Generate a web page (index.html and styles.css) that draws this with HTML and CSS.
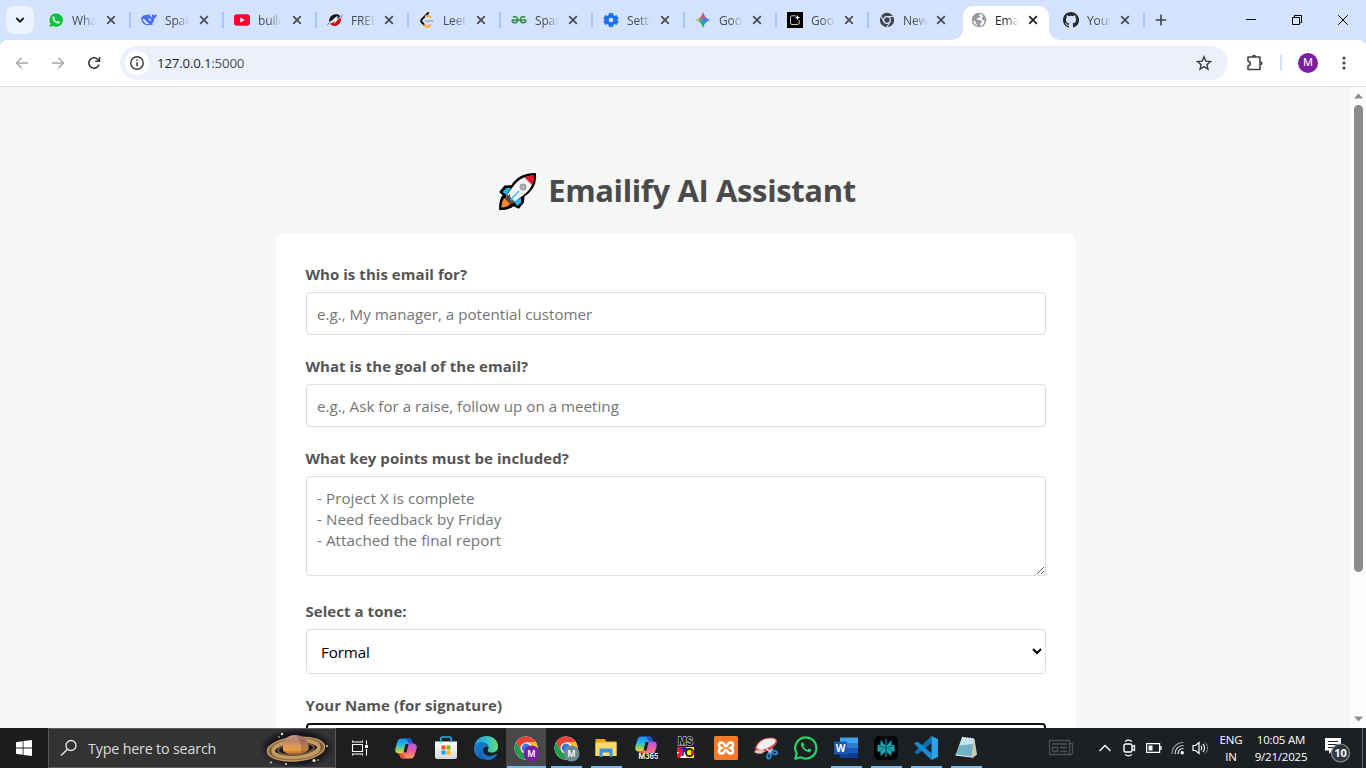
FILE: index.html
```html
<!DOCTYPE html>
<html lang="en">
<head>
<meta charset="utf-8">
<title>Emailify AI Assistant</title>
<link rel="stylesheet" href="styles.css">
</head>
<body>
<svg class="defs" width="0" height="0">
  <defs>
    <symbol id="x" viewBox="0 0 12 12"><path d="M2.2 2.2l7.6 7.6M9.8 2.2L2.2 9.8" stroke="currentColor" stroke-width="1.7" fill="none"/></symbol>
    <symbol id="wa" viewBox="0 0 24 24"><path d="M1.200 22.800l1.500-5.400A10.600 10.600 0 1 1 6.800 21.300z" fill="none" stroke="currentColor" stroke-width="2.200" stroke-linejoin="round"/><path d="M8.700 6.300c-.5-.2-1.200.3-1.500 1-.9 2 .7 4.600 2.500 6.300 1.900 1.800 4.500 3.100 6.300 2.300.9-.4 1.500-1.100 1.300-1.900-.1-.5-2.100-1.500-2.600-1.400-.5.100-.9 1.200-1.400 1.200-1.300-.3-3.200-2-3.700-3.300 0-.4.8-.9.8-1.400 0-.5-1-2.600-1.700-2.800z" fill="currentColor"/></symbol>
    <linearGradient id="cp1" x1="0" y1="0" x2="0" y2="1"><stop offset="0" stop-color="#168cf0"/><stop offset=".45" stop-color="#27bfd8"/><stop offset=".75" stop-color="#8fd35a"/><stop offset="1" stop-color="#ffd02e"/></linearGradient>
    <linearGradient id="cp2" x1="0" y1="0" x2="0" y2="1"><stop offset="0" stop-color="#a855f0"/><stop offset=".5" stop-color="#f25c9b"/><stop offset="1" stop-color="#ff9a4d"/></linearGradient>
    <symbol id="copilot" viewBox="1 1.500 22 21">
      <path d="M7 2h8c2 0 2.600 1 3.200 3l.8 2h-3c-1.500 0-2.300 1-2.700 2.500L11 17H5c-3 0-4.500-2-3.500-5.500l2-6.500C4.200 3 5 2 7 2z" fill="url(#cp1)"/>
      <path d="M11.500 2H15c2 0 2.600 1 3.200 3l.8 2h-3c-1 0-2-1-2.500-2.500C13 3 12.500 2 11.500 2z" fill="#2350c8"/>
      <path d="M17 22H9c-2 0-2.600-1-3.200-3L5 17h3c1.500 0 2.300-1 2.700-2.500L13 7h6c3 0 4.500 2 3.500 5.500l-2 6.500c-.7 2-1.500 3-3.500 3z" fill="url(#cp2)"/>
      <path d="M12.500 22H9c-2 0-2.600-1-3.200-3L5 17h3c1 0 2 1 2.500 2.500.5 1.500 1 2.500 2 2.500z" fill="#ef5545"/>
      <path d="M11.500 7.500h3l-2 8.500h-3z" fill="#1c1c1c"/>
    </symbol>
    <symbol id="chrome" viewBox="0 0 24 24">
      <circle cx="12" cy="12" r="11.500" fill="#fff"/>
      <path d="M12 12V6.500h10A11.500 11.500 0 0 0 2 6.300L7.200 15z" fill="#ea4335"/>
      <path d="M12 6.500h10.100A11.500 11.500 0 0 1 12 23.500L16.800 15A5.500 5.500 0 0 0 12 6.500z" fill="#fbc116"/>
      <path d="M7.200 14.800L2 6.300A11.500 11.500 0 0 0 12 23.500l4.800-8.700a5.500 5.500 0 0 1-9.600 0z" fill="#229c4b"/>
      <circle cx="12" cy="12" r="5.500" fill="#fff"/><circle cx="12" cy="12" r="4.400" fill="#3478e8"/>
    </symbol>
    <linearGradient id="edge1" x1="0" y1="0" x2="1" y2="0"><stop offset="0" stop-color="#209dd8"/><stop offset=".55" stop-color="#35bfd0"/><stop offset="1" stop-color="#66de68"/></linearGradient>
    <linearGradient id="edge2" x1="0" y1="0" x2="1" y2="1"><stop offset="0" stop-color="#1a84d6"/><stop offset="1" stop-color="#0d4f9d"/></linearGradient>
    <linearGradient id="bag" x1="0" y1="0" x2="0" y2="1"><stop offset="0" stop-color="#fff"/><stop offset="1" stop-color="#d5d7d8"/></linearGradient>
    <linearGradient id="planet" x1="0" y1="0" x2="0" y2="1"><stop offset="0" stop-color="#c49b88"/><stop offset=".3" stop-color="#b98271"/><stop offset=".55" stop-color="#d9975a"/><stop offset=".75" stop-color="#ef9c3e"/><stop offset="1" stop-color="#a45f32"/></linearGradient>
    <radialGradient id="space"><stop offset=".7" stop-color="#15141f"/><stop offset="1" stop-color="#15141f" stop-opacity="0"/></radialGradient>
  </defs>
</svg>
<div class="screen">
  <div class="tabstrip">
    <button class="tabsearch"><svg width="12" height="12" viewBox="0 0 12 12"><path d="M2.300 4l3.700 3.700L9.700 4" fill="none" stroke="#1f1f1f" stroke-width="1.900"/></svg></button>
    <div class="tabs">
      <div class="tab wide"><svg class="fav" viewBox="0 0 16 16"><path d="M.8 15.500l1-4A7.200 7.200 0 1 1 5 14.600z" fill="#12c143" stroke="#fff" stroke-width=".7"/><path d="M5.700 4.200c-1.500.4-1.400 2.400-.4 4 1.100 1.900 3.400 3.700 5.300 3.300 1-.3 1.400-1.200 1.100-1.700l-1.600-.8-.9 1c-1.300-.5-2.400-1.600-2.900-2.700l.7-.9z" fill="#fff"/></svg><span class="tt">What</span><svg class="cl"><use href="#x"/></svg></div>
      <div class="tab wide"><svg class="fav" viewBox="0 0 16 16"><path d="M.2 6.500C.8 3.500 3.600 2.500 6.500 3c.8-1.200 1.600-.6 2.400.5 1 1.300 1.500 2 2.300 1.700-.6-1-.6-2.200 0-3.200.5 1 1.100 1.400 2 1.200.9-.2 1.500-.9 2.600-.5-.1 1.600-1 3-2.500 3.700-.1 2.200-.9 4-2.300 5.300l1 .8c-1 .7-2 .4-3 .2C5.500 14.300.5 12 .2 6.500z" fill="#4d6bfe"/><path d="M1.700 6.700c2.500-.5 4.300 4 6.800 5-3 1.200-6.400-1.400-6.800-5zM7.200 6.500c1.200-.7 2.600.2 3 2-.4.600-1 .7-1.500.4z" fill="#d3e3fd"/></svg><span class="tt">Spar</span><svg class="cl"><use href="#x"/></svg></div>
      <div class="tab wide"><svg class="fav" viewBox="0 0 16 16"><rect y="2.200" width="16" height="11.600" rx="3" fill="#f03"/><path d="M6.300 5.400v5.200L10.800 8z" fill="#fff"/></svg><span class="tt">build</span><svg class="cl"><use href="#x"/></svg></div>
      <div class="tab"><svg class="fav" viewBox="0 0 16 16"><path d="M2.300 10C1.500 5.500 5 1.500 10 2.300c1.500.3 2.700 1 3.300 2L9.800 7 10.800 4C7.500 5 6 8.500 2.300 10z" fill="#151515"/><path d="M3 11.500c3.500 0 6.500-4.500 10.500-6 1.500 4-1.500 8.500-6 8.500-2 0-3.700-1-4.500-2.500z" fill="#c8090c"/><path d="M5 10.500L10.300 4 9 8l3.200-1.800-5.500 6 1.500-4.200z" fill="#fff"/><path d="M.2 13.500L3 9M13 7.500l2.500-5" stroke="#936672" stroke-width=".8"/></svg><span class="tt">FREE</span><svg class="cl"><use href="#x"/></svg></div>
      <div class="tab"><svg class="fav" viewBox="0 0 16 16"><path d="M9.200 1L3 7.200c-1 1-1 2.200 0 3.300l2.300 2.400" fill="none" stroke="#070707" stroke-width="1.900" stroke-linecap="round"/><path d="M5.300 13c1.600 2.300 4 2.400 6 .2M6.500 4.300c2-1.300 3.500-.9 5 .8" fill="none" stroke="#ffa116" stroke-width="1.800" stroke-linecap="round"/><path d="M6.700 9h7" stroke="#b3b3b3" stroke-width="1.800" stroke-linecap="round"/></svg><span class="tt">Leet</span><svg class="cl"><use href="#x"/></svg></div>
      <div class="tab"><svg class="fav" viewBox="0 0 16 16"><path d="M.7 8h14.600M2 5.400c2.300-1.700 4.700-.3 4.700 2.400 0 4-5.300 4-5.600.3M14 5.400c-2.300-1.700-4.700-.3-4.700 2.400 0 4 5.300 4 5.600.3" fill="none" stroke="#2f8d46" stroke-width="1.500"/></svg><span class="tt">Spar</span><svg class="cl"><use href="#x"/></svg></div>
      <div class="tab"><svg class="fav" viewBox="0 0 16 16"><path d="M6.200 1.300h3.600l.4 2 1.400.8 2-.7 1.700 3L13.800 8l1.500 1.600-1.700 3-2-.7-1.400.8-.4 2H6.200l-.4-2-1.400-.8-2 .7-1.700-3L2.200 8 .7 6.400l1.700-3 2 .7 1.400-.8z" fill="#1a73e8" stroke="#1a73e8" stroke-width=".6" stroke-linejoin="round"/><circle cx="8" cy="8" r="2.300" fill="#d3e3fd"/></svg><span class="tt">Setti</span><svg class="cl"><use href="#x"/></svg></div>
      <div class="tab"><svg class="fav" viewBox="0 0 16 16"><defs><linearGradient id="gm" x1="0" x2="1"><stop stop-color="#ffc515"/><stop offset=".3" stop-color="#61b785"/><stop offset=".58" stop-color="#3287fc"/><stop offset="1" stop-color="#2786fa"/></linearGradient><linearGradient id="gr" x1="0" y1="0" x2="0" y2="1"><stop stop-color="#f7434a"/><stop offset=".25" stop-color="#f7434a"/><stop offset=".5" stop-color="#f7434a" stop-opacity="0"/></linearGradient><linearGradient id="gg" x1="0" y1="1" x2="0" y2="0"><stop stop-color="#08b962"/><stop offset=".2" stop-color="#08b962"/><stop offset=".45" stop-color="#08b962" stop-opacity="0"/></linearGradient></defs><path d="M8 .3C9 4.500 11.500 7 15.500 8 11.500 9 9 11.500 8 15.500 7 11.500 4.500 9 .5 8 4.500 7 7 4.500 8 .3z" fill="url(#gm)"/><path d="M8 .3C9 4.500 11.500 7 15.500 8 11.500 9 9 11.500 8 15.500 7 11.500 4.500 9 .5 8 4.500 7 7 4.500 8 .3z" fill="url(#gr)"/><path d="M8 .3C9 4.500 11.500 7 15.500 8 11.500 9 9 11.500 8 15.500 7 11.500 4.500 9 .5 8 4.500 7 7 4.500 8 .3z" fill="url(#gg)"/></svg><span class="tt">Goo</span><svg class="cl"><use href="#x"/></svg></div>
      <div class="tab"><svg class="fav" viewBox="0 0 16 16"><path d="M0 0h16v16H0z"/><path d="M8.500 3.800H5A1.500 1.500 0 0 0 3.500 5.300v5.700A1.500 1.500 0 0 0 5 12.500h5.700a1.500 1.500 0 0 0 1.500-1.500V8" fill="none" stroke="#ccc" stroke-width="1"/><path d="M10.500 2.800l.7 2 2 .7-2 .7-.7 2-.7-2-2-.7 2-.7z" fill="#fff"/></svg><span class="tt">Goo</span><svg class="cl"><use href="#x"/></svg></div>
      <div class="tab nosep"><svg class="fav" viewBox="0 0 16 16"><circle cx="8" cy="8" r="7.200" fill="#41454b"/><circle cx="8" cy="8" r="3.300" fill="#41454b" stroke="#d3e3fd" stroke-width="1.300"/><path d="M8 4.500h6.800M5 9.800L1.700 4M11 9.800l-3.300 5.700" stroke="#d3e3fd" stroke-width="1.100"/></svg><span class="tt">New</span><svg class="cl"><use href="#x"/></svg></div>
      <div class="tab active"><svg class="fav" viewBox="0 0 16 16"><circle cx="8" cy="8" r="7.300" fill="#979ba0"/><path d="M8.500 2L8 3.500l1.500.8L8 6l-2 .3.500 1.600 3 .2 1.500 1.700-1.500 1.700-.5 2.400c3-.6 4.600-3 4.500-5.500l-2-.300-1-1.600 1.500-2C11.200 2.800 10 2 8.500 2zM2.300 8l2.400 1.900.2 1.700 1.800 1.600v.6C4 13.300 2.300 11 2.300 8z" fill="#fff"/></svg><span class="tt">Ema</span><svg class="cl"><use href="#x"/></svg></div>
      <div class="tab"><svg class="fav" viewBox="0 0 16 16"><path fill="#24292f" d="M8 0C3.580 0 0 3.580 0 8c0 3.540 2.290 6.530 5.470 7.590.4.070.55-.17.55-.38v-1.490c-2.010.37-2.530-.49-2.690-.94-.09-.23-.48-.94-.82-1.130-.28-.15-.68-.52-.01-.53.63-.01 1.080.58 1.230.82.72 1.210 1.870.87 2.330.66.070-.52.280-.87.510-1.070-1.780-.2-3.640-.89-3.640-3.950 0-.87.31-1.590.82-2.150-.08-.2-.36-1.020.08-2.120 0 0 .67-.21 2.200.82a7.600 7.600 0 0 1 4 0c1.530-1.040 2.200-.82 2.200-.82.44 1.100.16 1.920.08 2.120.51.56.82 1.270.82 2.150 0 3.070-1.870 3.750-3.650 3.950.29.25.54.73.54 1.480v2.200c0 .21.15.46.55.38A8 8 0 0 0 8 0z"/></svg><span class="tt">Your</span><svg class="cl"><use href="#x"/></svg></div>
    </div>
    <svg class="plus" width="12" height="12" viewBox="0 0 12 12"><path d="M6 .8v10.400M.8 6h10.400" stroke="#3c4043" stroke-width="1.600"/></svg>
    <div class="winctl">
      <svg viewBox="0 0 12 12"><path d="M1 5.500h10" stroke="#000"/></svg>
      <svg viewBox="0 0 12 12"><path d="M1.500 3.500h7v7h-7zM3.500 3V1.500h7v7H9" fill="none" stroke="#000"/></svg>
      <svg viewBox="0 0 12 12"><path d="M1.200 1.200l9.600 9.600M10.800 1.200l-9.600 9.600" stroke="#000"/></svg>
    </div>
  </div>
  <div class="toolbar">
    <div class="nav">
      <svg viewBox="0 0 16 16"><path d="M14 8H2.500M7.800 2.700L2.500 8l5.300 5.300" fill="none" stroke="#a4a7ab" stroke-width="1.500"/></svg>
      <svg viewBox="0 0 16 16"><path d="M2 8h11.500M8.200 2.700L13.500 8l-5.300 5.300" fill="none" stroke="#a4a7ab" stroke-width="1.500"/></svg>
      <svg viewBox="0 0 16 16"><path d="M13 9.500A5.200 5.200 0 1 1 11.700 4.300L13 5.700" fill="none" stroke="#34373b" stroke-width="1.600"/><path d="M13.500 2V6.300H9.200" fill="none" stroke="#34373b" stroke-width="1.500"/></svg>
    </div>
    <div class="omnibox">
      <span class="info"><svg width="16" height="16" viewBox="0 0 16 16"><circle cx="8" cy="8" r="6.200" fill="none" stroke="#34373b" stroke-width="1.400"/><path d="M8 7.200v4M8 4.500v1.500" stroke="#34373b" stroke-width="1.500"/></svg></span>
      <span class="url">127.0.0.1<i>:5000</i></span>
      <svg class="star" width="16" height="16" viewBox="0 0 16 16"><path d="M8 1.800l1.800 4.300 4.700.4-3.600 3.100 1.100 4.600L8 11.700l-4 2.500 1.100-4.600L1.500 6.500l4.700-.4z" fill="none" stroke="#3c4043" stroke-width="1.400"/></svg>
    </div>
    <svg class="puzzle" width="18" height="18" viewBox="0 0 18 18"><path d="M2 3h12v12.500H2v-3.700c3-.3 3-4.300 0-4.600z" fill="none" stroke="#41454a" stroke-width="1.600" stroke-linejoin="round"/><path d="M5.800 3a2.200 2.200 0 0 1 4.400 0zM14.500 7.200a2 2 0 0 1 0 4z" fill="#41454a"/></svg>
    <i class="tsep"></i>
    <span class="avatar">M</span>
    <svg class="dots" width="4" height="16" viewBox="0 0 4 16"><g fill="#41454a"><circle cx="2" cy="3" r="1.600"/><circle cx="2" cy="8" r="1.600"/><circle cx="2" cy="13" r="1.600"/></g></svg>
  </div>
  <div class="viewport">
    <main class="page">
      <h1><svg class="rocket" width="39" height="39" viewBox="0 0 39 39"><path d="M37 2C27 2 19 6 14 14L7 14.500 2.500 20l3.500 3C3 26 2 31 2 37c6 0 10.500-1 13.500-4l5 2.500 4.500-5.500.5-6C33 19 38 11 37 2z" fill="#000" stroke="#000" stroke-width="2" stroke-linejoin="round"/><path d="M36 3.500C27 4 20 7 14 16L8 24l7 7 8-6C31 20 35.500 13 36 3.500z" fill="#f3f4f5"/><path d="M36 3.500c-3.500.2-6.500.8-9.500 2L34 13c1.300-3 2-6 2-9.500z" fill="#e81224"/><path d="M13 16H8.500L4.500 20l4 3zM23 26v4.500L19.500 34l-4-4.500z" fill="#26b7ef"/><path d="M9.500 22.500l8 8-4.500 1.500-6-6z" fill="#555"/><path d="M6.500 26l6 6c-2.500 2.500-5 3.200-9 3.500 0-4 .5-7 3-9.500z" fill="#f7892b"/><path d="M12 21.500L8.500 26l4 4z" fill="#444"/><path d="M12.500 28l8.500-9" stroke="#26b7ef" stroke-width="1.200"/><circle cx="25" cy="15" r="3.400" fill="#9b9b9b"/><circle cx="24.800" cy="15.200" r="2" fill="#bbb"/></svg><span>Emailify AI Assistant</span></h1>
      <form class="card">
        <label>Who is this email for?</label>
        <input placeholder="e.g., My manager, a potential customer">
        <label>What is the goal of the email?</label>
        <input placeholder="e.g., Ask for a raise, follow up on a meeting">
        <label>What key points must be included?</label>
        <textarea placeholder="- Project X is complete&#10;- Need feedback by Friday&#10;- Attached the final report"></textarea>
        <label>Select a tone:</label>
        <select><option>Formal</option></select>
        <label>Your Name (for signature)</label>
        <input class="focused">
      </form>
    </main>
    <div class="scroll">
      <svg width="9" height="6" viewBox="0 0 9 6"><path d="M0 5.500h9L4.500.5z" fill="#8b8b8b"/></svg>
      <i class="thumb"></i>
      <svg width="9" height="6" viewBox="0 0 9 6"><path d="M0 .5h9L4.500 5.500z" fill="#8b8b8b"/></svg>
    </div>
  </div>
  <div class="taskbar">
    <div class="start"><svg width="16" height="16" viewBox="0 0 16 16"><path d="M0 2.200l6.700-1v6.400H0zM7.500 1.100L16 0v7.600H7.500zM0 8.400h6.700v6.400l-6.700-1zM7.500 8.400H16V16l-8.500-1.100z" fill="#fff"/></svg></div>
    <div class="search">
      <svg width="18" height="18" viewBox="0 0 18 18"><circle cx="11" cy="6.500" r="5" fill="none" stroke="#e6e6e6" stroke-width="1.300"/><path d="M7.500 10.200L1 16.500" stroke="#e6e6e6" stroke-width="1.500"/></svg>
      <span>Type here to search</span>
      <svg class="saturn" width="76" height="38" viewBox="0 0 76 38"><ellipse cx="38" cy="19" rx="38" ry="20" fill="url(#space)"/><g transform="rotate(-5 38 20)" fill="none"><ellipse cx="37" cy="20" rx="28.500" ry="11.500" stroke="#c89a5c" stroke-width="1.800"/><ellipse cx="37" cy="20" rx="26.500" ry="10" stroke="#8c6a43" stroke-width="2"/><ellipse cx="37" cy="20" rx="23" ry="8" stroke="#c49a64" stroke-width="4"/><ellipse cx="37" cy="20" rx="18" ry="5.800" stroke="#6e5136" stroke-width="2"/></g><path d="M24 21.500C22.500 11 28 6 36 6s14.500 5.500 13.500 14.500c-4.500 6-21.500 7-25.500 1z" fill="url(#planet)"/><path d="M36 6c5.500 4 6.500 10 6 18 3-.5 6-2 7.500-3.500C50.500 11.500 44 6 36 6z" fill="#6e4233" opacity=".35"/><g fill="#f0e3c8"><circle cx="23" cy="5" r="1.200"/><circle cx="20" cy="8" r=".8"/><circle cx="55" cy="31.500" r="1.600"/><circle cx="59" cy="31" r=".8"/><circle cx="27" cy="35" r="1"/><circle cx="12" cy="33.500" r=".9"/><circle cx="68" cy="17" r=".9"/></g></svg>
    </div>
    <div class="taskview"><svg width="18" height="18" viewBox="0 0 18 18"><path d="M1.500 5.500h10v7h-10zM1.500 1.500v2M11.500 1.500v2M1 3h11M1.500 16.500v-2M11.500 16.500v-2M1 15h11M15.500 1.500v4M15.500 10v6.500" fill="none" stroke="#fff" stroke-width="1.100"/><path d="M14 6h3v3h-3z" fill="#fff"/></svg></div>
    <div class="apps">
      <div class="app"><svg viewBox="0 0 24 24"><use href="#copilot" x="1" y="2" width="22" height="21"/></svg></div>
      <div class="app"><svg viewBox="0 0 24 24"><path d="M1 5.500h22V21a2 2 0 0 1-2 2H3a2 2 0 0 1-2-2z" fill="url(#bag)"/><path d="M6.700 6.500V3c0-1.300.6-2 2-2h6.600c1.400 0 2 .7 2 2v3.500" fill="none" stroke="#28afe0" stroke-width="1.600"/><path d="M7.500 9.500h4v4h-4z" fill="#f25022"/><path d="M12.500 9.500h4v4h-4z" fill="#7fba00"/><path d="M7.500 14.500h4v4h-4z" fill="#00a4ef"/><path d="M12.500 14.500h4v4h-4z" fill="#ffb900"/></svg></div>
      <div class="app"><svg viewBox="0 0 24 24"><path d="M.5 9.500C2 3.500 6.500 0 12.500 0 19 0 24 4.500 24 10.500c0 4-3 6-6.500 6-3 0-4.500-1.200-3.600-2.500 2-3.500-.8-7.500-5.400-7.500-4 0-6.500 1.500-8 3z" fill="url(#edge1)"/><path d="M.5 9.500C2.500 7 5 6.300 8.500 6.500c3.500.2 5.500 2.500 5.900 4.700-2.500-1.700-5.900.8-5.400 4.300.5 3 3.500 6 8 5.500C9 27-.8 21 0 12c0-1 .2-1.800.5-2.500z" fill="url(#edge2)"/><path d="M9 15.500c.5 3.500 5 6.500 13.500 2.500.6-.2.800.3.500.8-2.500 4-6.500 5.700-10.500 5.200C7 22 5.500 14 10.500 10.500 9.300 12 8.800 13.800 9 15.500z" fill="#1672c4"/></svg></div>
      <div class="app on hot"><svg class="big" viewBox="0 0 26 26"><use href="#chrome" width="24" height="24"/><circle cx="17.500" cy="17.500" r="8" fill="#7b1fa2"/><text x="17.500" y="20.700" class="badge">M</text></svg></div>
      <div class="app on"><svg class="big" viewBox="0 0 26 26"><use href="#chrome" width="24" height="24"/><circle cx="17.500" cy="17.500" r="8" fill="#718895"/><text x="17.500" y="20.700" class="badge">M</text></svg></div>
      <div class="app on"><svg viewBox="0 0 24 24"><path d="M1.500 3h9l2 2.500h10V20h-21z" fill="#e9a51d"/><path d="M1.500 6.500h21V20h-21z" fill="#ffda6c"/><path d="M5.500 12.500h13V21h-3v-4.500h-7V21h-3z" fill="#3593dc"/></svg></div>
      <div class="app"><svg viewBox="0 0 24 24"><use href="#copilot" x="0" y="0" width="24" height="21"/><rect x="5" y="17" width="19" height="7" fill="#080808"/><text x="14.500" y="23" class="m365">M365</text></svg></div>
      <div class="app"><svg viewBox="0 0 24 24"><text x="11.500" y="9" class="ms">MS</text><path d="M3 11h17v11H3z" fill="#fff"/><path d="M3 11h9v5H3z" fill="#ed1824"/><path d="M12 11h8v11h-8z" fill="#fff500"/><path d="M3 18l5-4 1 3-3 5H3z" fill="#ed1824"/><text x="9" y="20.300" class="tc">T</text><circle cx="15.500" cy="16.500" r="3.600" fill="#fff500" stroke="#222" stroke-width="2"/><path d="M17 15h3v3h-3z" fill="#ed1824"/></svg></div>
      <div class="app"><svg viewBox="0 0 24 24"><rect width="24" height="24" rx="1.500" fill="#f57b28"/><path d="M10.500 9C9 5.500 5 6 5 9c0 1.500.8 2.500 2 3-1.200.5-2 1.500-2 3 0 3 4.500 3.500 5.500.2.500-1.700 2.500-1.700 3 0 1 3.300 5.500 2.800 5.500-.2 0-1.500-.8-2.500-2-3 1.200-.5 2-1.500 2-3 0-3-4-3.500-5.500 0-.6 1.500-2.400 1.500-3 0z" fill="none" stroke="#fff" stroke-width="2.600"/></svg></div>
      <div class="app"><svg viewBox="0 0 24 24"><path d="M1 14C1 7 8 1 18 1.500c4 .2 6 2.500 5 5-2 5-9 9-15 10z" fill="#d64743"/><path d="M2.500 12C4 6 10 2 18 2.500c3.500.3 4.500 2 3 4-3 4-9 6.500-14.500 7.500z" fill="#f1f1f1"/><path d="M0 16c3-3 8-3 11-1-2 3-7 4-11 1z" fill="#e5b8b5"/><path d="M11 11l7 7M18.500 12.500L14 18" stroke="#ddd" stroke-width="1.600"/><g fill="none" stroke="#2587cf" stroke-width="2"><ellipse cx="15" cy="20" rx="1.700" ry="2.700" transform="rotate(20 15 20)"/><ellipse cx="20.500" cy="16.500" rx="2.700" ry="1.700" transform="rotate(20 20.500 16.500)"/></g></svg></div>
      <div class="app green"><svg viewBox="0 0 24 24"><use href="#wa"/></svg></div>
      <div class="app on"><svg viewBox="0 0 24 24"><path d="M6 1.500h18v7H6z" fill="#41a5ee"/><path d="M6 7h18v5.500H6z" fill="#2b7cd3"/><path d="M6 12h18v5.500H6z" fill="#185abd"/><path d="M6 17h18v5H6z" fill="#103f91"/><rect y="5.500" width="13" height="13" rx="1" fill="#1856b8"/><text x="6.500" y="15.700" class="word">W</text></svg></div>
      <div class="app on"><svg viewBox="0 0 24 24"><rect width="24" height="24" rx="5" fill="#030709"/><path d="M11.200 9.500L6.500 4v5H3.500v6.500h3V20l4.700-4zM12.800 9.500L17.500 4v5h3v6.500h-3V20l-4.700-4z" fill="#1fa6b3"/><path d="M12 3v18" stroke="#1fa6b3" stroke-width="1.100"/><path d="M10.500 11l-4 4M13.500 11l4 4M5 10.500h4M15 10.500h4" stroke="#0b4950" stroke-width=".9"/></svg></div>
      <div class="app on"><svg viewBox="0 0 24 24"><path d="M17.500 0v7L3.500 18.500 0 16.500z" fill="#0870b7"/><path d="M3.500 5.500L17.500 17v7L0 7.500z" fill="#168bd2"/><path d="M17.500 0L24 3v18l-6.500 3z" fill="#2ba3eb"/></svg></div>
      <div class="app on"><svg viewBox="0 0 24 24"><path d="M8 1.500l12.500 1.500L23 18.500l-5 4z" fill="#cfc6ad"/><path d="M8 1.500L20 3l-2.500 18L1.500 19z" fill="#9dcddc"/><path d="M8 1.500L20 3l-1 5L5.500 9.500z" fill="#c4e4ed"/><path d="M5.500 9.500L19 8l-1.500 13L1.500 19z" fill="#5a9fb5" opacity=".65"/><path d="M8 1.500L20.500 3" stroke="#f5f7f8" stroke-width="1.500" stroke-dasharray="1.500 1"/><path d="M1.500 19l16 2" stroke="#eef"/></svg></div>
    </div>
    <div class="tray">
      <svg class="news" width="26" height="18" viewBox="0 0 26 18"><path d="M1.500 1.500h20v14h-20zM21.500 4.500h3V14c0 1-.5 1.500-1.500 1.500h-2M4 5h15M4.500 8.500h5v4h-5zM12 8.500h7M12 12.500h7" fill="none" stroke="#4c4f50" stroke-width="1.300"/></svg>
      <svg class="chev" width="14" height="8" viewBox="0 0 14 8"><path d="M1.500 7L7 1.500 12.500 7" fill="none" stroke="#fff" stroke-width="1.300"/></svg>
      <svg class="meet" width="14" height="18" viewBox="0 0 14 18"><rect x="2" y="5" width="8" height="8" rx="1.800" fill="none" stroke="#fff" stroke-width="1.400"/><path d="M10 8l2.500-1.500v5L10 10M3 2.500c2-1.500 5-1.500 7 0M3 15.500c2 1.500 5 1.500 7 0" fill="none" stroke="#fff" stroke-width="1.200"/></svg>
      <svg class="batt" width="16" height="10" viewBox="0 0 16 10"><path d="M.6.600h13v8.800h-13zM15 3v4" fill="none" stroke="#fff" stroke-width="1.200"/><path d="M2.500 2.500h4v5h-4z" fill="#fff"/></svg>
      <svg class="wifi" width="14" height="14" viewBox="0 0 14 14"><g fill="none" stroke="#9a9d9e" stroke-width="1.200"><path d="M1 13C1 6 6 1.500 12.500 1.500"/><path d="M4 13c0-5 3.500-8.500 8.500-8.500" stroke="#ddd"/><path d="M7 13c0-3 2-5.500 5.500-5.500" stroke="#fff"/></g><circle cx="11.200" cy="11.800" r="1.800" fill="#fff"/></svg>
      <svg class="vol" width="17" height="14" viewBox="0 0 17 14"><path d="M1 4.500h2.500L7 1.500v11L3.500 9.500H1z" fill="none" stroke="#fff" stroke-width="1.200"/><path d="M9 5c1 1 1 3 0 4M11 3c2 2 2 6 0 8" fill="none" stroke="#fff" stroke-width="1.100"/><path d="M13.300 1.500c3 3 3 8 0 11" fill="none" stroke="#85888a"/></svg>
      <div class="lang"><span>ENG</span><span>IN</span></div>
      <div class="clock"><span>10:05 AM</span><span>9/21/2025</span></div>
      <svg class="notif" width="26" height="26" viewBox="0 0 26 26"><path d="M0 1h16v12.500H7.500L4 17v-3.500H0z" fill="#fff"/><path d="M3 4.500h10M3 7.500h10M3 10.500h6" stroke="#20252a"/><circle cx="15.500" cy="16" r="9" fill="#34383a" stroke="#8b8e90" stroke-width="1.200"/><text x="15.500" y="20" class="ten">10</text></svg>
      <i class="peek"></i>
    </div>
  </div>
</div>
</body>
</html>
```
FILE: styles.css
```css
* { box-sizing: border-box; }
body { margin: 0; font-family: "Open Sans", "Noto Sans", sans-serif; overflow: hidden; }
svg { display: block; flex: none; }
.defs { position: absolute; }
.screen { width: 1366px; height: 768px; display: flex; flex-direction: column; }

.tabstrip { height: 40px; background: #d3e3fd; display: flex; align-items: center; flex: none; }
.tabsearch { width: 28px; height: 28px; margin-left: 6px; border: 0; padding: 0; border-radius: 9px; background: #ecf2fe; display: flex; align-items: center; justify-content: center; }
.tabs { display: flex; margin-left: 4px; align-self: stretch; }
.tab { width: 92px; display: flex; align-items: center; padding-left: 10px; color: #474b52; background: linear-gradient(#a8c7fa, #a8c7fa) right 12px / 2px 16px no-repeat; }
.tab.wide { width: 93px; }
.tab.nosep { background: none; }
.fav { width: 16px; height: 16px; }
.tt { width: 24px; margin-left: 8px; white-space: nowrap; font-size: 12px; line-height: 18px; padding-top: 1px; letter-spacing: -.15px; -webkit-mask-image: linear-gradient(90deg, #000 45%, transparent 100%); mask-image: linear-gradient(90deg, #000 45%, transparent 100%); }
.cl { width: 12px; height: 12px; margin-left: 8px; }
.tab.wide .cl { margin-left: 9px; }
.tab.active { color: #1f1f1f; position: relative; height: 34px; align-self: flex-end; margin: 0 4px 0 2px; width: 86px; padding: 0 0 6px 8px; background: #fff; border-radius: 10px 10px 0 0; }
.tab.active::before, .tab.active::after { content: ""; position: absolute; bottom: 0; width: 11px; height: 11px; }
.tab.active::before { left: -11px; background: radial-gradient(circle at 0 0, transparent 10.5px, #fff 11px); }
.tab.active::after { right: -11px; background: radial-gradient(circle at 100% 0, transparent 10.5px, #fff 11px); }
.plus { margin-left: 10px; }
.winctl { margin-left: auto; display: flex; gap: 34px; padding-right: 17px; }
.winctl svg { width: 12px; height: 12px; }

.toolbar { height: 47px; flex: none; border-bottom: 1px solid #dfe1e3; background: radial-gradient(circle at 8px 8px, #fff 8px, transparent 8.5px) 0 0 / 8px 8px no-repeat, radial-gradient(circle at 0 8px, #fff 8px, transparent 8.5px) 100% 0 / 8px 8px no-repeat, linear-gradient(#fff, #fff) 8px 0 / 1350px 8px no-repeat, linear-gradient(#d3e3fd 8px, #fff 8px); display: flex; align-items: center; }
.nav { display: flex; gap: 20px; padding-left: 14px; width: 120px; }
.nav svg { width: 16px; height: 16px; }
.omnibox { width: 1108px; height: 34px; border-radius: 17px; background: #ecf0fa; display: flex; align-items: center; padding: 0 16px 0 5px; }
.info { width: 24px; height: 24px; border-radius: 50%; background: #fff; display: flex; align-items: center; justify-content: center; }
.url { margin-left: 8px; font-size: 13.300px; color: #1f1f1f; letter-spacing: -.2px; }
.url i { font-style: normal; color: #4b4f55; }
.star { margin-left: auto; }
.puzzle { margin-left: 18px; }
.tsep { width: 2px; height: 16px; background: #d3e3fd; margin-left: 16px; }
.avatar { width: 20px; height: 20px; border-radius: 50%; background: #7b1fa2; color: #fff; font: 11px/20px Roboto, sans-serif; text-align: center; margin-left: 16px; }
.dots { margin-left: 24px; }

.viewport { height: 641px; display: flex; overflow: hidden; background: #f4f7f6; }
.page { width: 1351px; padding: 82px 0 0 1px; display: flex; flex-direction: column; align-items: center; }
h1 { margin: 0; height: 45px; flex: none; color: #4a4a4a; font-size: 31px; line-height: 45px; font-weight: 700; display: flex; align-items: center; gap: 11px; letter-spacing: -.37px; white-space: nowrap; }
h1 svg { margin-left: 2px; }
h1 span { margin-top: -2px; }
.card { width: 800px; height: 620px; flex: none; margin-top: 19px; background: #fff; border-radius: 8px; padding: 30px; display: flex; flex-direction: column; }
label { height: 22px; line-height: 21px; padding-top: 1px; margin: 0 0 7px -.5px; color: #555; font-size: 15px; font-weight: 700; letter-spacing: .05px; white-space: nowrap; }
input, textarea, select { width: 740px; height: 43px; flex: none; border: 1px solid #ddd; border-radius: 4px; padding: 10px; margin: 0 0 20px; background: #fff; font: 15.200px/21px "Open Sans", sans-serif; letter-spacing: -.01px; outline: 0; color: #000; }
textarea { height: 100px; padding-top: 11px; margin-bottom: 24px; letter-spacing: .06px; }
select { height: 45px; letter-spacing: -.15px; }
.focused { border: 2px solid #101010; }
.scroll { width: 15px; background: #fcfcfc; display: flex; flex-direction: column; align-items: center; padding: 6px 0 6px; }
.scroll svg:last-child { margin-top: auto; }
.thumb { width: 9px; height: 467px; margin-top: 6px; border-radius: 5px; background: #8b8b8b; }

.taskbar { height: 40px; flex: none; display: flex; background: linear-gradient(90deg, #1d1d1d, #1d1f20 50%, #1b2024 80%); color: #fff; }
.start { width: 48px; display: flex; align-items: center; justify-content: center; }
.search { width: 288px; border: 1px solid #5b5b5b; background: #333; display: flex; align-items: center; padding-left: 11px; color: #dcdcdc; font-size: 14.300px; }
.search span { margin-left: 10px; white-space: nowrap; letter-spacing: -.18px; }
.saturn { margin-left: auto; }
.taskview { width: 50px; padding: 11px 0 0 15px; }
.apps { display: flex; }
.app { width: 40px; display: flex; align-items: center; justify-content: center; border: solid transparent; border-width: 0 0 2px; padding-top: 2px; }
.app svg { width: 24px; height: 24px; }
.app svg.big { width: 26px; height: 26px; margin: 1px 0 0 2px; }
.app.green { color: #25d366; }
.app.on { background: linear-gradient(#76b9ed, #76b9ed) center bottom / 31px 2px no-repeat border-box; }
.app.hot { background: linear-gradient(#76b9ed, #76b9ed) center bottom / 39px 2px no-repeat border-box, #484848; background-clip: border-box; }
.badge { font: 500 9px Roboto, sans-serif; fill: #fff; text-anchor: middle; }
.m365 { font: 700 7px Inter, sans-serif; fill: #fff; text-anchor: middle; }
.ms { font: 700 10px "Liberation Sans", sans-serif; fill: #000; stroke: #bbb; stroke-width: 1.400px; paint-order: stroke; text-anchor: middle; }
.tc { font: italic 700 11px "Liberation Sans", sans-serif; fill: #1718b0; text-anchor: middle; }
.word { font: 700 10px "Open Sans", sans-serif; fill: #fff; text-anchor: middle; }
.ten { font: 700 11px "Open Sans", sans-serif; fill: #fff; text-anchor: middle; }
.tray { flex: 1; display: flex; align-items: center; padding-left: 62px; }
.chev { margin-left: 24px; }
.meet { margin-left: 10px; }
.batt { margin-left: 10px; }
.wifi { margin-left: 9px; }
.vol { margin-left: 7px; }
.lang, .clock { display: flex; flex-direction: column; align-items: center; font-size: 11.500px; line-height: 17px; letter-spacing: -.2px; white-space: nowrap; }
.lang { width: 30px; margin-left: 7px; }
.lang, .clock { margin-top: -1px; }
.clock { width: 60px; margin-left: 5px; }
.notif { margin-left: 14px; margin-top: 4px; }
.peek { width: 1px; height: 40px; background: #666a6c; margin-left: 11px; }
```
